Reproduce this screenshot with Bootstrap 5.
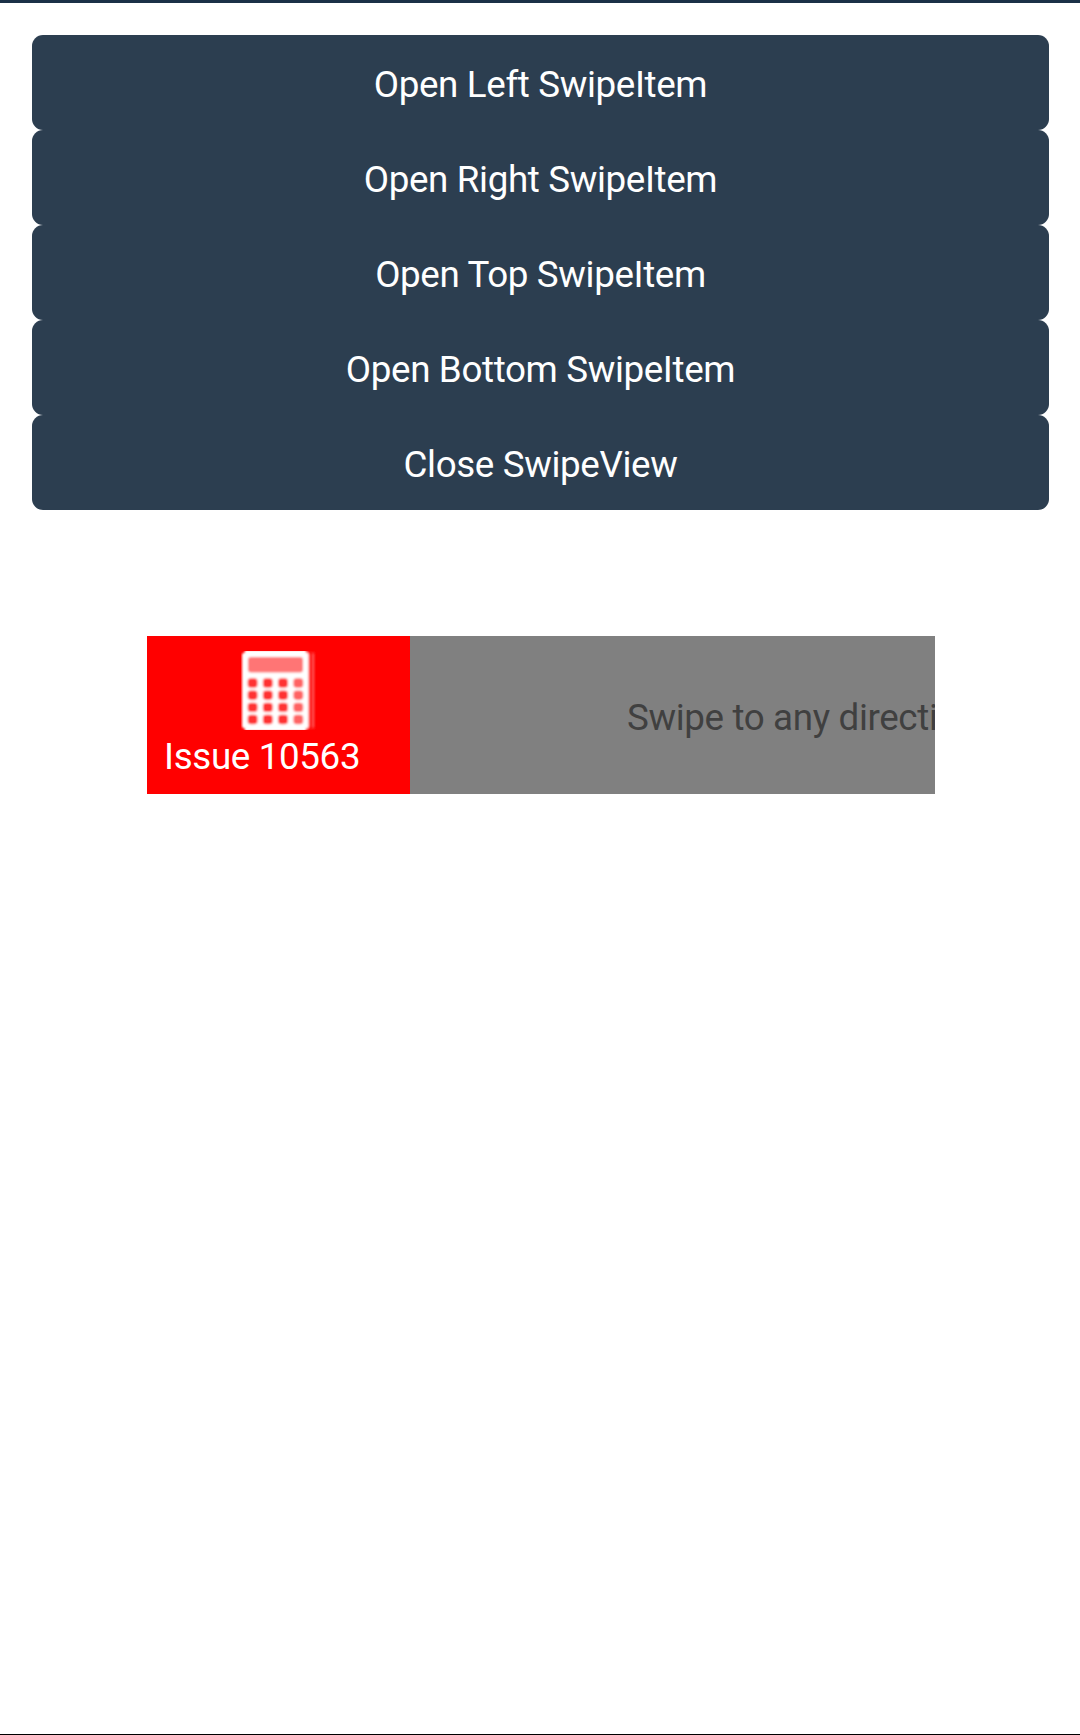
<!DOCTYPE html>
<html lang="en">
<head>
<meta charset="utf-8">
<meta name="viewport" content="width=device-width, initial-scale=1">
<title>SwipeView</title>
<link rel="stylesheet" href="https://cdn.jsdelivr.net/npm/bootstrap@5.3.0/dist/css/bootstrap.min.css">
<style>
body { font-family: Roboto, sans-serif; font-size: 36.75px; line-height: 43px; letter-spacing: -.35px; }
.page-frame { height: 1735px; border-top: 3px solid #1b3147; border-bottom: 1px solid #000; padding: 32px 31px 0 32px; }
.btn-swipe { --bs-btn-color: #fff; --bs-btn-bg: #2c3e50; --bs-btn-hover-color: #fff; --bs-btn-hover-bg: #34495e; --bs-btn-font-size: 36.75px; --bs-btn-line-height: 43px; --bs-btn-border-width: 0; --bs-btn-border-radius: 11px; height: 95px; padding: 4px 0 0; letter-spacing: -.36px; }
.swipe-view { width: 788px; height: 158px; margin: 126px 0 0 115px; }
.swipe-action { width: 263px; background: #f00; padding: 15px 0 0 17px; }
.swipe-action svg { margin-left: 77px; margin-bottom: 5px; }
.swipe-content { width: 788px; background: #808080; color: #404040; padding: 4px 3px 0 0; }
</style>
<script src="https://cdn.jsdelivr.net/npm/bootstrap@5.3.0/dist/js/bootstrap.bundle.min.js"></script>
</head>
<body>
<main class="page-frame d-flex flex-column">
  <div class="d-grid">
    <button type="button" class="btn btn-swipe">Open Left SwipeItem</button>
    <button type="button" class="btn btn-swipe">Open Right SwipeItem</button>
    <button type="button" class="btn btn-swipe">Open Top SwipeItem</button>
    <button type="button" class="btn btn-swipe">Open Bottom SwipeItem</button>
    <button type="button" class="btn btn-swipe">Close SwipeView</button>
  </div>
  <section class="swipe-view d-flex overflow-hidden">
    <div class="swipe-action d-flex flex-column flex-shrink-0 text-white">
      <svg width="76" height="79" viewBox="0 0 76 79" aria-hidden="true">
        <defs><filter id="soften" x="-10%" y="-10%" width="120%" height="120%"><feGaussianBlur stdDeviation=".9"/></filter></defs>
        <g filter="url(#soften)">
          <path fill="#ff2020" d="M66 0h4q4 0 4 4v71q0 4-4 4h-4z"/>
          <path fill="#f00" d="M68 -1h2.6v81h-2.6z"/>
          <path fill="#ff5858" d="M71.2 3h1.6v73h-1.6z"/>
          <path fill="#fff" d="M4-1h61v2l2.6 2v73l-2.6 2v2H4v-2l-3-2V3l3-2z"/>
          <rect x="7" y="6" width="55" height="15.5" rx="3" fill="#ff7474"/>
          <g fill="#ff3030">
            <rect x="6.7" y="27.3" width="9.8" height="9.4" rx="3.3"/><rect x="21.9" y="27.3" width="9.8" height="9.4" rx="3.3"/><rect x="37.1" y="27.3" width="9.8" height="9.4" rx="3.3"/>
            <rect x="6.7" y="39.5" width="9.8" height="9.4" rx="3.3"/><rect x="21.9" y="39.5" width="9.8" height="9.4" rx="3.3"/><rect x="37.1" y="39.5" width="9.8" height="9.4" rx="3.3"/>
            <rect x="6.7" y="51.7" width="9.8" height="9.4" rx="3.3"/><rect x="21.9" y="51.7" width="9.8" height="9.4" rx="3.3"/><rect x="37.1" y="51.7" width="9.8" height="9.4" rx="3.3"/>
            <rect x="6.7" y="63.8" width="9.8" height="9.4" rx="3.3"/><rect x="21.9" y="63.8" width="9.8" height="9.4" rx="3.3"/><rect x="37.1" y="63.8" width="9.8" height="9.4" rx="3.3"/>
          </g>
          <g fill="#ff6464">
            <rect x="52.4" y="27.3" width="9.8" height="9.4" rx="3.3"/><rect x="52.4" y="39.5" width="9.8" height="9.4" rx="3.3"/><rect x="52.4" y="51.7" width="9.8" height="9.4" rx="3.3"/><rect x="52.4" y="63.8" width="9.8" height="9.4" rx="3.3"/>
          </g>
        </g>
      </svg>
      <span>Issue 10563</span>
    </div>
    <div class="swipe-content d-flex flex-shrink-0 align-items-center justify-content-center">Swipe to any direction</div>
  </section>
</main>
</body>
</html>
